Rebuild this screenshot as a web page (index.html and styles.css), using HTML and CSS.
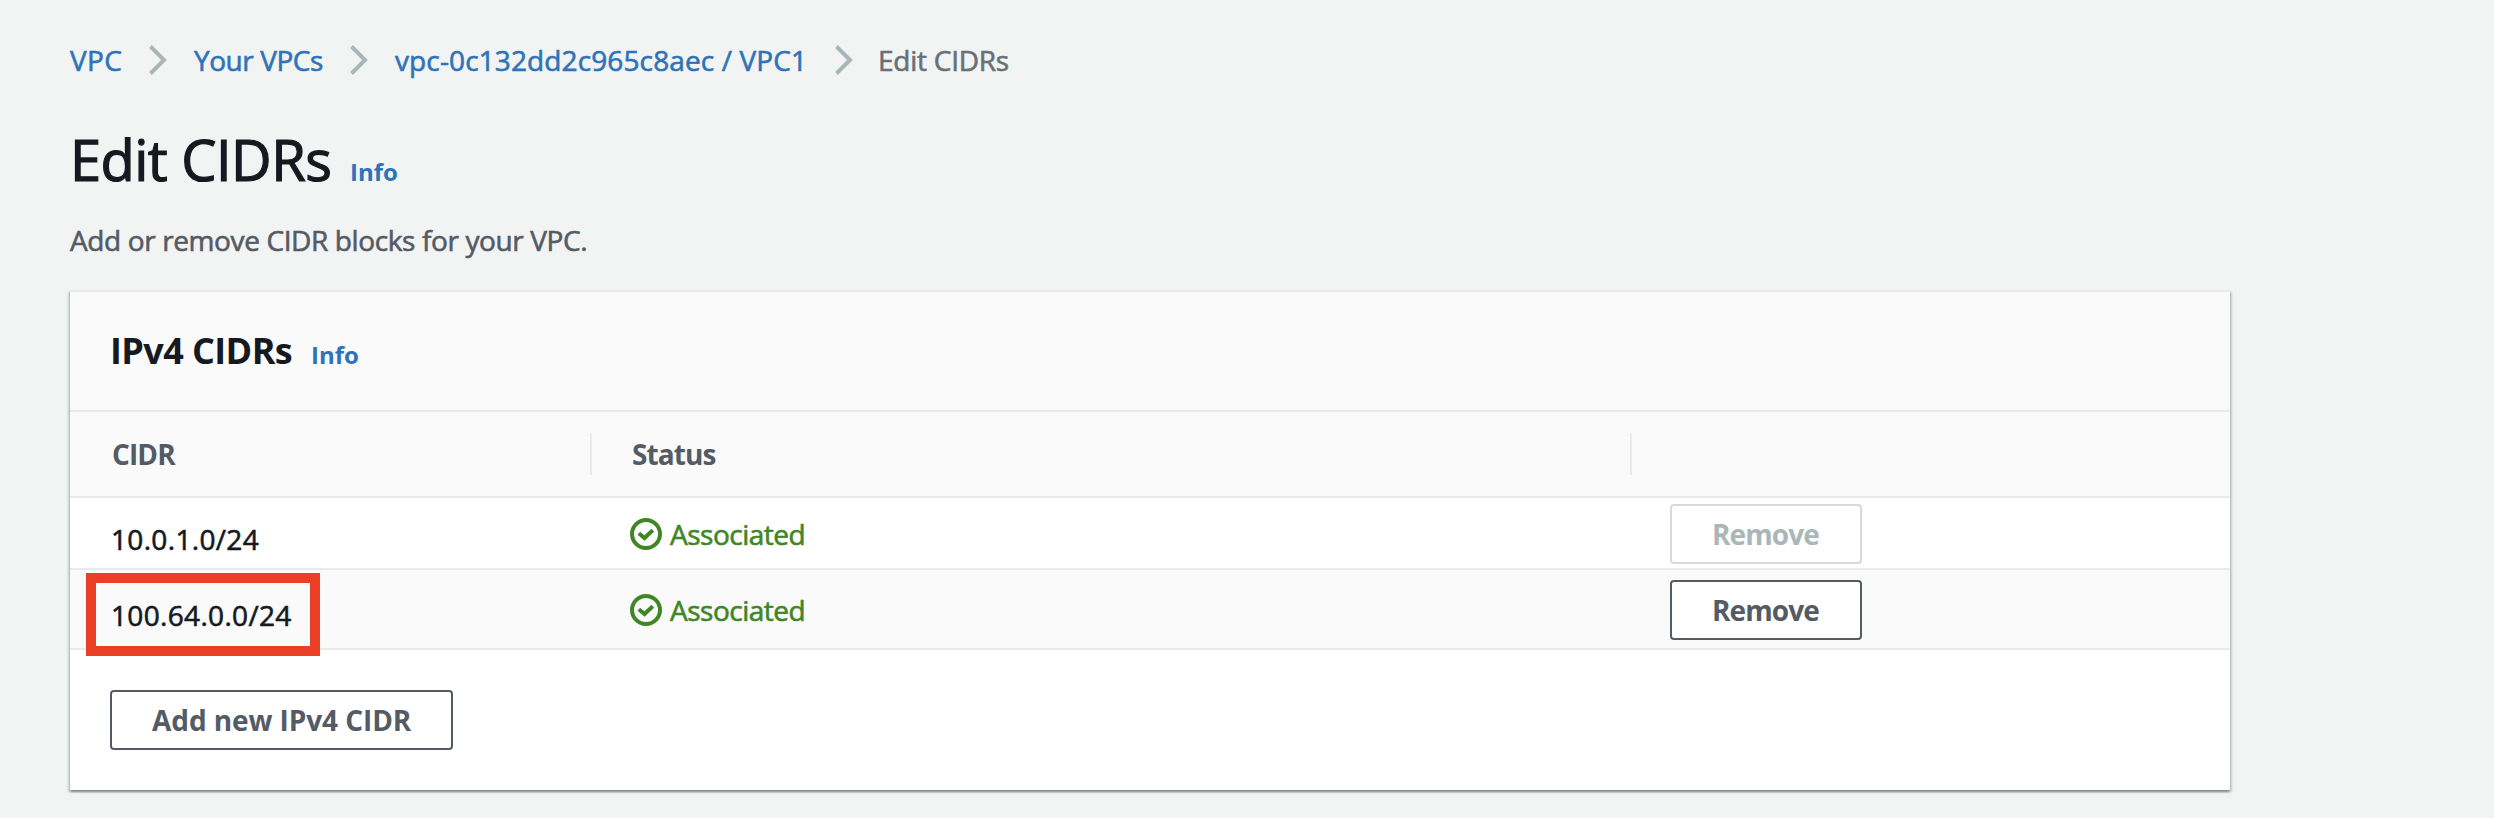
FILE: index.html
```
<!DOCTYPE html>
<html lang="en">
<head>
<meta charset="utf-8">
<title>Edit CIDRs</title>
<link rel="stylesheet" href="styles.css">
</head>
<body>
<nav class="breadcrumb">
  <a class="crumb crumb-vpc">VPC</a>
  <svg class="chevron" viewBox="0 0 20 32"><path d="M2.5 2.5 16 16 2.5 29.5"/></svg>
  <a class="crumb crumb-list">Your VPCs</a>
  <svg class="chevron" viewBox="0 0 20 32"><path d="M2.5 2.5 16 16 2.5 29.5"/></svg>
  <a class="crumb crumb-id">vpc-0c132dd2c965c8aec / VPC1</a>
  <svg class="chevron" viewBox="0 0 20 32"><path d="M2.5 2.5 16 16 2.5 29.5"/></svg>
  <span class="crumb crumb-current">Edit CIDRs</span>
</nav>
<header class="page-header">
  <h1 class="page-title">Edit CIDRs</h1>
  <a class="info">Info</a>
</header>
<p class="description">Add or remove CIDR blocks for your VPC.</p>
<section class="card">
  <div class="card-header">
    <h2 class="card-title">IPv4 CIDRs</h2>
    <a class="info">Info</a>
  </div>
  <div class="row row-head">
    <div class="head">CIDR</div>
    <div class="head">Status</div>
    <div></div>
  </div>
  <div class="row row-first">
    <div class="cidr">10.0.1.0/24</div>
    <div class="status">
      <svg class="check" viewBox="0 0 32 32"><circle cx="16" cy="16" r="14"/><path d="M8.8 15.2 14.5 20 22.8 12.3"/></svg>
      <span>Associated</span>
    </div>
    <div class="action"><button class="button button-remove" disabled>Remove</button></div>
  </div>
  <div class="row row-second">
    <div class="cidr">100.64.0.0/24<div class="highlight"></div></div>
    <div class="status">
      <svg class="check" viewBox="0 0 32 32"><circle cx="16" cy="16" r="14"/><path d="M8.8 15.2 14.5 20 22.8 12.3"/></svg>
      <span>Associated</span>
    </div>
    <div class="action"><button class="button button-remove">Remove</button></div>
  </div>
  <div class="card-footer"><button class="button button-add">Add new IPv4 CIDR</button></div>
</section>
</body>
</html>
```
FILE: styles.css
```
* { box-sizing: border-box; }
body {
  margin: 0;
  padding: 40px 0 0 70px;
  height: 818px;
  background: #f2f3f3;
  color: #16191f;
  font: 400 28px/40px "Open Sans", "Noto Sans", sans-serif;
  white-space: nowrap;
}
h1, h2, p { margin: 0; }

/* Regular-weight text is thickened slightly */
.crumb, .page-title, .description, .cidr, .status span { -webkit-text-stroke: 0.6px currentColor; }

.breadcrumb { display: flex; height: 40px; }
.crumb { color: #2e73b8; }
.crumb-vpc { width: 78px; letter-spacing: 0.3px; }
.crumb-list { width: 155px; margin-left: 26px; letter-spacing: -0.45px; }
.crumb-id { width: 439px; margin-left: 26px; letter-spacing: 0.12px; }
.crumb-current { margin-left: 24px; color: #687078; letter-spacing: -0.25px; }
.chevron {
  width: 20px;
  height: 32px;
  margin-top: 4px;
  fill: none;
  stroke: #aab7b8;
  stroke-width: 4;
}

.page-header { display: flex; align-items: baseline; height: 72px; margin-top: 43px; }
.page-title {
  width: 280px;
  font-size: 56px;
  line-height: 72px;
  font-weight: 400;
  letter-spacing: -0.55px;
  -webkit-text-stroke-width: 1.2px;
}
.info { color: #2e73b8; font-size: 24px; font-weight: 700; line-height: 32px; }
.description { margin-top: 25px; color: #545b64; letter-spacing: -0.38px; }

.card {
  width: 2160px;
  height: 500px;
  margin-top: 30px;
  background: #fff;
  border-top: 2px solid #eaeaea;
  box-shadow: 0 2px 2px 0 rgba(0, 28, 36, .3), 2px 2px 2px 0 rgba(0, 28, 36, .15), -2px 2px 2px 0 rgba(0, 28, 36, .15);
}
.card-header {
  display: flex;
  align-items: baseline;
  height: 120px;
  padding: 31px 0 0 40px;
  background: #fafafa;
  border-bottom: 2px solid #eaeaea;
}
.card-title { width: 201px; font-size: 36px; line-height: 56px; letter-spacing: -0.6px; }

.row {
  display: grid;
  grid-template-columns: 520px 1040px 600px;
  border-bottom: 2px solid #eaeaea;
}
.row-head {
  grid-template-columns: 522px 1040px 598px;
  align-items: center;
  height: 86px;
  background: #fafafa;
}
.head {
  height: 42px;
  padding-left: 42px;
  border-right: 2px solid #eaeaea;
  color: #545b64;
  font-weight: 700;
  line-height: 42px;
  letter-spacing: -0.9px;
}
.head + .head { padding-left: 40px; }
.row-first { height: 72px; padding-top: 6px; }
.row-second { height: 80px; padding-top: 10px; background: #fafafa; }
.cidr { position: relative; padding: 15px 0 0 41px; letter-spacing: 0.33px; }
.highlight {
  position: absolute;
  left: 16px;
  top: -7px;
  width: 234px;
  height: 83px;
  border: 10px solid #e83f25;
}
.status {
  display: flex;
  align-items: center;
  gap: 8px;
  height: 60px;
  padding-left: 40px;
  color: #3f8624;
  letter-spacing: -0.5px;
}
.check { width: 32px; height: 32px; fill: none; stroke: currentColor; stroke-width: 4; }
.action { padding-left: 40px; }
.button {
  display: block;
  height: 60px;
  padding: 0 0 0 40px;
  background: #fff;
  border: 2px solid #545b64;
  border-radius: 4px;
  color: #545b64;
  font: 700 28px/56px "Open Sans", "Noto Sans", sans-serif;
  text-align: left;
}
.button:disabled { color: #aab7b8; border-color: #d5dbdb; }
.button-remove { width: 192px; letter-spacing: -0.9px; }
.button-add { width: 343px; letter-spacing: -0.08px; }
.card-footer { padding: 40px 0 0 40px; }
```
